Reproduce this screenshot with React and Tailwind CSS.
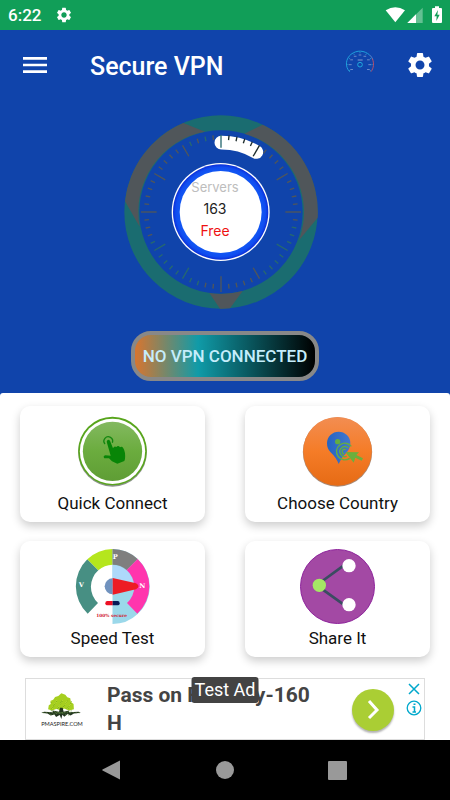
import React from "react";
import { MdMenu, MdSettings } from "react-icons/md";

function point(cx, cy, r, deg) {
  const a = (deg * Math.PI) / 180;
  return [cx + r * Math.sin(a), cy - r * Math.cos(a)];
}

function StatusIcons() {
  return (
    <svg viewBox="480 18 174 54" className="h-[18px] w-[58px]" aria-hidden="true">
      <path d="M482 31 Q511 12 540 31 L511 67 Z" fill="#fff" />
      <path d="M593 23 V69 H547 Z" fill="#fff" opacity="0.35" />
      <path d="M573 43 V69 H547 Z" fill="#fff" />
      <path d="M630 19 h12 v5 h6 q3 0 3 3 v39 q0 3 -3 3 h-24 q-3 0 -3 -3 v-39 q0 -3 3 -3 h6 Z" fill="#fff" />
      <path d="M639 30 L628 49 h7 l-1 14 L644 44 h-7 Z" fill="#119e58" />
    </svg>
  );
}

function GaugeIcon() {
  const marks = [-120, -90, -60, -30, 0, 30, 60, 90, 120];
  return (
    <svg viewBox="360 150 90 90" className="size-[30px]" aria-hidden="true" fill="none">
      <path d="M374 215 C359 200 362 176 378 163 C396 149 418 151 434 165" stroke="#1f9fdc" strokeWidth="3" />
      <path d="M434 165 Q441 171 443 178" stroke="#5a86c8" strokeWidth="3" />
      <path d="M442 176 C448 190 446 205 438 215" stroke="#b3516f" strokeWidth="3" />
      {marks.map((m) => {
        const [x1, y1] = point(405, 194, 38, m);
        const [x2, y2] = point(405, 194, 34, m);
        const [x3, y3] = point(405, 194, 29, m);
        return (
          <g key={m}>
            <path d={`M${x1} ${y1} L${x2} ${y2}`} stroke="#35afe0" strokeWidth="2" />
            <path d={`M${x3 - 4} ${y3} h8`} stroke="#6b8aca" strokeWidth="3" />
          </g>
        );
      })}
      <path d="M398 180 h15" stroke="#7f9bd0" strokeWidth="3" />
      <circle cx="405" cy="194" r="7" stroke="#20a8dc" strokeWidth="3" />
    </svg>
  );
}

function Dial() {
  const ticks = Array.from({ length: 60 }, (_, i) => i);
  return (
    <svg viewBox="27 28 582 582" className="col-start-1 row-start-1 size-[194px]" aria-hidden="true">
      <defs>
        <radialGradient id="rim">
          <stop offset="0.84" stopColor="#1259f4" />
          <stop offset="0.94" stopColor="#104df0" />
          <stop offset="1" stopColor="#0b2fd8" />
        </radialGradient>
      </defs>
      <circle cx="318" cy="319" r="267.5" fill="none" stroke="#1a6c70" strokeWidth="45" />
      <g fill="#50565a">
        <path d="M205 52 A290 290 0 0 0 30 287 L74 363 A245 245 0 0 1 270 78 Z" />
        <path d="M443 57 A290 290 0 0 1 608 336 L552 404 A245 245 0 0 0 388 84 Z" />
        <path d="M283 562 A245 245 0 0 0 383 556 L345 608 A290 290 0 0 1 315 609 Z" />
      </g>
      <path d="M319 111 A208 208 0 0 1 424 139" fill="none" stroke="#fff" strokeWidth="41" strokeLinecap="round" />
      {ticks.map((i) => {
        const major = i % 5 === 0;
        const outer = i % 15 === 0 && i > 0 ? 240 : 231;
        const [x1, y1] = point(318, 319, outer, i * 6);
        const [x2, y2] = point(318, 319, major ? 193 : 217, i * 6);
        const lit = i > 0 && i < 6;
        const teal = i === 0 || i === 58 || i === 56 || (i > 16 && i < 25) || (i > 32 && i < 42);
        const color = lit ? "#1c2b2b" : teal ? "#27686f" : "#50565a";
        return <path key={i} d={`M${x1} ${y1} L${x2} ${y2}`} stroke={color} strokeWidth="4" />;
      })}
      <circle cx="317" cy="319" r="147" fill="#fff" />
      <circle cx="317" cy="319" r="143" fill="url(#rim)" />
      <circle cx="317" cy="319" r="123" fill="#fff" />
    </svg>
  );
}

function TouchIcon() {
  return (
    <svg viewBox="225 87 225 225" className="size-[75px]" aria-hidden="true">
      <defs>
        <linearGradient id="leaf" x1="0" y1="0" x2="0" y2="1">
          <stop offset="0" stopColor="#83b960" />
          <stop offset="0.5" stopColor="#6bac3e" />
          <stop offset="1" stopColor="#5f9d35" />
        </linearGradient>
      </defs>
      <circle cx="337.5" cy="202" r="103" fill="#667064" opacity="0.75" />
      <circle cx="337.5" cy="198" r="103" fill="#58a51c" />
      <circle cx="337.5" cy="199" r="98" fill="#fff" />
      <circle cx="337.5" cy="199" r="89" fill="url(#leaf)" />
      <path d="M315 177 A13 13 0 1 1 337 173" fill="none" stroke="#128610" strokeWidth="4" />
      <path
        d="M320 170 Q323 161 330 167 L339 190 Q343 181 349 186 Q355 180 360 187 Q366 183 370 190 Q377 201 375 222 L373 228 L352 236 L336 229 L327 220 L313 220 Q308 213 316 211 L332 212 Z"
        fill="#088507"
      />
    </svg>
  );
}

function PinIcon() {
  return (
    <svg viewBox="225 87 225 225" className="size-[75px]" aria-hidden="true">
      <defs>
        <linearGradient id="amber" x1="0" y1="0" x2="0" y2="1">
          <stop offset="0" stopColor="#f28d52" />
          <stop offset="0.5" stopColor="#f57c27" />
          <stop offset="1" stopColor="#e66b15" />
        </linearGradient>
        <linearGradient id="pin" x1="0" y1="0" x2="1" y2="0">
          <stop offset="0" stopColor="#2463c2" />
          <stop offset="1" stopColor="#4478ce" />
        </linearGradient>
      </defs>
      <circle cx="337.5" cy="201" r="104" fill="#8a6248" opacity="0.75" />
      <circle cx="337.5" cy="199" r="103" fill="url(#amber)" />
      <path d="M341 237 Q334 218 316 201 Q306 191 306 175 A35 35 0 0 1 376 175 Q376 190 366 201 Q349 217 341 237 Z" fill="url(#pin)" />
      <circle cx="338" cy="170" r="8" fill="#63ad40" />
      <g fill="none" stroke="#65ad43" strokeWidth="4">
        <path d="M379 184 A25 25 0 1 0 374 220" />
        <path d="M370 189 A15 15 0 1 0 365 214" />
        <path d="M362 194 A7 7 0 1 0 358 207" />
      </g>
      <path d="M361 201 L402 202 L394 210 L414 220 L410 227 L391 218 L386 233 Z" fill="#6caf3d" />
    </svg>
  );
}

function SpeedIcon() {
  return (
    <svg viewBox="225 60 225 225" className="size-[75px]" aria-hidden="true">
      <path d="M337.500 60 A112.500 112.500 0 0 1 412 256 Q382 285 337.500 285 Z" fill="#9bd8ea" />
      <path d="M337.500 108 A64 64 0 0 1 401 172 H337.500 Z" fill="#aed9fb" />
      <path d="M263 254 A112.500 112.500 0 0 1 262 91 L295 124 A66 66 0 0 0 294 222 Z" fill="#478f83" />
      <path d="M262 91 A112.500 112.500 0 0 1 337.500 60 V107 A66 66 0 0 0 295 124 Z" fill="#b5e61d" />
      <path d="M337.500 60 A112.500 112.500 0 0 1 413 90 L380 123 A66 66 0 0 0 337.500 107 Z" fill="#7f7f7f" />
      <path d="M413 90 A112.500 112.500 0 0 1 412 254 L381 222 A66 66 0 0 0 380 123 Z" fill="#ff35ad" />
      <path d="M338 148 A24 24 0 0 0 338 196 Z" fill="#7092be" />
      <path d="M338 147 L408 163 Q423 172 408 181 L338 197 Z" fill="#ed1c24" />
      <path d="M338 216 H322 Q316 216 316 222.500 T322 229 H338 Z" fill="#ed1024" />
      <path d="M338 216 H353 Q359 216 359 222.500 T353 229 H338 Z" fill="#071b57" />
      <g fill="#fff" fontFamily="DejaVu Serif, serif" fontWeight="700" fontSize="20" textAnchor="middle">
        <text x="244" y="174">V</text>
        <text x="346" y="89">P</text>
        <text x="427" y="177">N</text>
      </g>
      <text x="335" y="263" fill="#d02033" fontFamily="DejaVu Serif, serif" fontWeight="700" fontSize="13" textAnchor="middle">
        100% secure
      </text>
    </svg>
  );
}

function ShareIcon() {
  return (
    <svg viewBox="225 60 225 225" className="size-[75px]" aria-hidden="true">
      <circle cx="337.500" cy="172.500" r="111" fill="#a349a4" stroke="#8e249c" strokeWidth="3" />
      <path d="M372 98 L284 162 M284 175 L372 238" stroke="#3a4c61" strokeWidth="8" />
      <circle cx="372" cy="110" r="20" fill="#fff" />
      <circle cx="372" cy="227" r="20" fill="#fff" />
      <circle cx="283" cy="169" r="20" fill="#a5e865" />
    </svg>
  );
}

function TreeLogo() {
  const dots = Array.from({ length: 70 }, (_, i) => i);
  return (
    <svg viewBox="120 76 135 106" className="h-[35px] w-[45px] shrink-0" role="img" aria-label="pmaspire.com">
      <path d="M144 128 L146 116 L152 112 L151 104 L160 99 L165 91 L175 88 L184 80 L196 84 L202 92 L211 95 L213 106 L221 112 L222 128 L208 132 L192 126 L183 133 L170 127 L156 132 Z" fill="#a6cf1f" />
      {dots.map((i) => (
        <circle key={i} cx={153 + ((i * 37) % 63)} cy={102 + ((i * 17) % 26)} r="1.500" fill={i % 2 ? "#6da71c" : "#c8df3e"} />
      ))}
      <path d="M180 124 L188 124 L191 136 L208 132 L207 137 L236 136 L243 139 L222 141 L212 147 L203 143 L193 151 L187 145 L184 158 L179 146 L168 152 L163 144 L152 147 L142 141 L123 139 L132 136 L158 137 L157 132 L177 136 Z" fill="#22351f" />
      <path d="M128 139 H240 M150 145 L216 133 M152 132 L213 148" stroke="#6a9448" strokeWidth="2" strokeDasharray="4 5" />
      <text x="186" y="178" fill="#222" fontFamily="Lato, sans-serif" fontSize="17" textAnchor="middle">
        PMASPIRE.COM
      </text>
    </svg>
  );
}

const actions = [
  { label: "Quick Connect", Icon: TouchIcon },
  { label: "Choose Country", Icon: PinIcon },
  { label: "Speed Test", Icon: SpeedIcon },
  { label: "Share It", Icon: ShareIcon },
];

export default function App() {
  return (
    <div className="flex min-h-screen flex-col bg-[#1044ab] font-['Roboto',sans-serif]">
      <div className="flex h-[30px] items-center bg-[#119e58] pr-[7px] pl-2 text-white">
        <span className="pt-[2px] text-[17px] font-medium">6:22</span>
        <MdSettings className="ml-[14px] size-[18px]" />
        <span className="ml-auto">
          <StatusIcons />
        </span>
      </div>

      <header className="flex h-[70px] items-center pr-[15px] pl-[19px] text-white">
        <button aria-label="Menu">
          <MdMenu className="size-8" />
        </button>
        <h1 className="ml-[39px] pt-1 text-[25px] leading-8 font-medium">Secure VPN</h1>
        <button className="ml-auto" aria-label="Speed gauge">
          <GaugeIcon />
        </button>
        <button className="ml-[30px]" aria-label="Settings">
          <MdSettings className="size-[30px]" />
        </button>
      </header>

      <section className="flex flex-col items-center pt-[15px] pb-3">
        <div className="grid place-items-center pr-2">
          <Dial />
          <div className="col-start-1 row-start-1 pr-3 pb-[6px] text-center font-['Inter','Roboto',sans-serif] text-sm leading-[22px]">
            <p className="text-[13px] text-[#bdbdbd]">Servers</p>
            <p className="text-[#222222]">163</p>
            <p className="text-[#ee1111]">Free</p>
          </div>
        </div>
        <button className="mt-[22px] h-[50px] rounded-[20px] border-4 border-[#888888] bg-linear-to-r/srgb from-[#d8752f] via-[#109ba8] via-35% to-black px-2 pt-[2px] text-[17px] font-medium whitespace-nowrap text-[#c5edfb]">
          NO VPN CONNECTED
        </button>
      </section>

      <main className="flex grow flex-col justify-between rounded-t-[3px] bg-white pt-[13px]">
        <div className="grid grid-cols-2 gap-x-10 gap-y-[19px] px-5">
          {actions.map(({ label, Icon }) => (
            <button
              key={label}
              className="flex flex-col items-center rounded-[10px] bg-white pt-2 pb-[5px] shadow-[0_4px_10px_rgba(0,0,0,0.2)]"
            >
              <Icon />
              <span className="text-[17px] leading-7 text-[#111111]">{label}</span>
            </button>
          ))}
        </div>

        <aside className="relative mx-[25px] mt-5 flex h-[62px] items-start border border-[#dddddd] bg-white">
          <div className="pt-[13px] pl-[14px]">
            <TreeLogo />
          </div>
          <a href="#ad" className="ml-[22px] grow basis-0 pt-[2px] pr-8 text-[21px] leading-7 font-bold text-[#444444]">
            Pass on First Try-160 H
          </a>
          <button
            aria-label="Open ad"
            className="mt-[10px] flex size-[42px] shrink-0 items-center justify-center rounded-full bg-[#aace34] shadow-[0_2px_2px_rgba(0,0,0,0.3)]"
          >
            <svg viewBox="0 0 42 42" className="size-[42px]" fill="none" stroke="#fff" strokeWidth="3" aria-hidden="true">
              <path d="M17 12 L25 21 L17 29" />
            </svg>
          </button>
          <div className="flex w-[30px] shrink-0 flex-col items-end gap-[3px] pt-[2px] pr-[2px]">
            <button aria-label="Close ad">
              <svg viewBox="0 0 16 16" className="size-4" fill="none" stroke="#00a8cc" strokeWidth="1.500" aria-hidden="true">
                <path d="M3 3 L13 13 M13 3 L3 13" />
              </svg>
            </button>
            <button aria-label="About this ad">
              <svg viewBox="0 0 16 16" className="size-4" fill="none" stroke="#00a8cc" aria-hidden="true">
                <circle cx="8" cy="8" r="6.800" strokeWidth="1.300" />
                <path d="M6.500 7 H8.500 V12 M6.500 12 H10" strokeWidth="1.500" />
                <path d="M7.500 3.500 h2 v1.500 h-2 Z" fill="#00a8cc" stroke="none" />
              </svg>
            </button>
          </div>
          <span className="absolute -top-[2px] left-1/2 -translate-x-1/2 rounded-[3px] bg-[#434343] px-[3px] text-lg leading-[26px] whitespace-nowrap text-white">
            Test Ad
          </span>
        </aside>
      </main>

      <nav className="grid h-[60px] grid-cols-3 place-items-center bg-black px-14">
        <button aria-label="Back">
          <svg viewBox="0 0 20 20" className="size-5" fill="#999" aria-hidden="true">
            <path d="M18 0.500 V19.500 L0.500 10.500 Q0 10 0.500 9.500 Z" />
          </svg>
        </button>
        <button aria-label="Home">
          <span className="block size-[18px] rounded-full bg-[#999999]" />
        </button>
        <button aria-label="Recent apps">
          <span className="block size-[19px] rounded-[1px] bg-[#999999]" />
        </button>
      </nav>
    </div>
  );
}
